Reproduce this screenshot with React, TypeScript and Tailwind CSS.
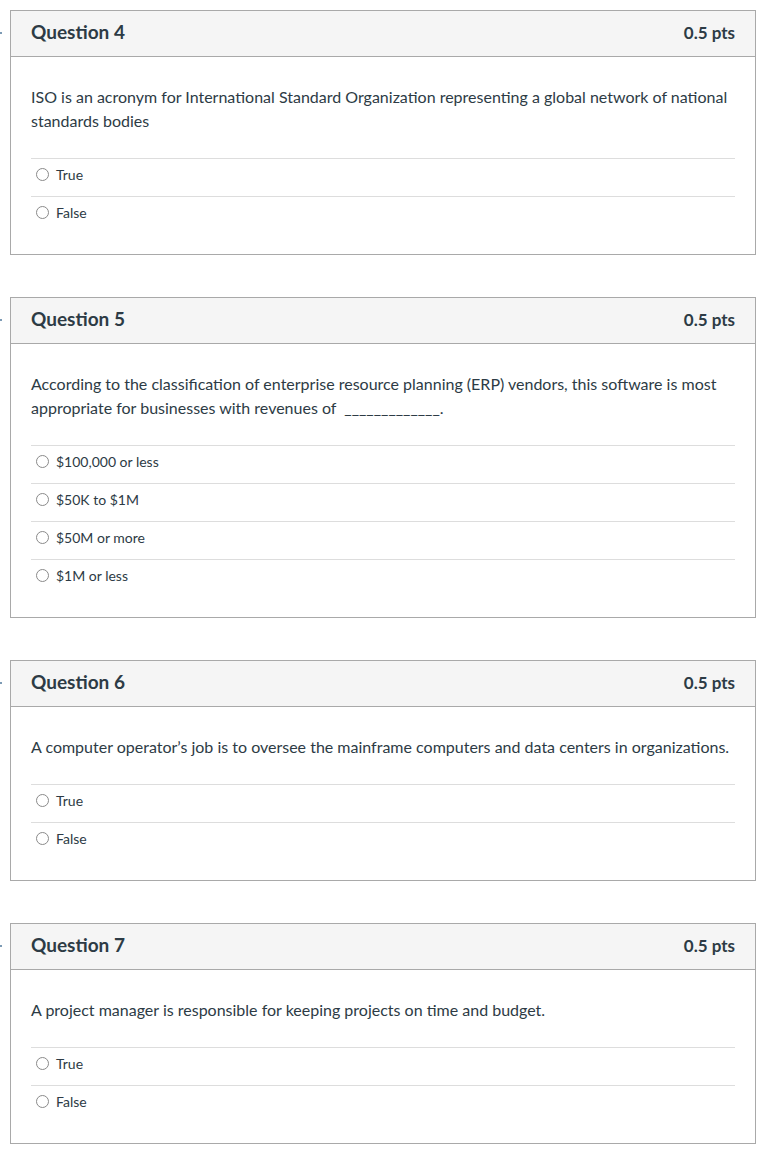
const QUESTIONS = [
  {
    id: 4,
    text: "ISO is an acronym for International Standard Organization representing a global network of national standards bodies",
    answers: ["True", "False"],
  },
  {
    id: 5,
    text: "According to the classification of enterprise resource planning (ERP) vendors, this software is most appropriate for businesses with revenues of  _____________.",
    answers: ["$100,000 or less", "$50K to $1M", "$50M or more", "$1M or less"],
  },
  {
    id: 6,
    text: "A computer operator\u2019s job is to oversee the mainframe computers and data centers in organizations.",
    answers: ["True", "False"],
  },
  {
    id: 7,
    text: "A project manager is responsible for keeping projects on time and budget.",
    answers: ["True", "False"],
  },
];

function QuestionCard({ q }: { q: (typeof QUESTIONS)[number] }) {
  return (
    <section className="relative border border-[#a9a9a9] bg-white">
      {/* little marker off the left edge */}
      <span className="absolute -left-[11px] top-[21px] h-[2px] w-[2px] bg-[#7d9bb5]" />
      <div className="flex h-[46px] items-center justify-between border-b border-[#a9a9a9] bg-[#f5f5f5] px-5 pb-[2px]">
        <h2 className="text-[19px] font-bold text-[#2d3b45]">Question {q.id}</h2>
        <span className="text-[17px] font-bold text-[#2d3b45]">0.5 pts</span>
      </div>
      <div className="px-5 pb-5 pt-[28px]">
        <p className="whitespace-pre-wrap text-[16px] leading-6 text-[#2d3b45]">{q.text}</p>
        <div className="mt-[25px]">
          {q.answers.map((a) => (
            <label
              key={a}
              className="flex h-[38px] items-center gap-[7px] border-t border-[#dddddd] pb-[7px] pl-[5px] text-[14px] text-[#2d3b45]"
            >
              <span className="h-[13px] w-[13px] rounded-full border border-[#8a8a8a] bg-white" />
              {a}
            </label>
          ))}
        </div>
      </div>
    </section>
  );
}

export default function App() {
  return (
    <div
      className="min-h-[1159px] w-[773px] bg-white px-[10px] pt-[10px]"
      style={{ fontFamily: "Lato, 'Open Sans', sans-serif" }}
    >
      <div className="flex w-[746px] flex-col gap-[42px]">
        {QUESTIONS.map((q) => (
          <QuestionCard key={q.id} q={q} />
        ))}
      </div>
    </div>
  );
}
